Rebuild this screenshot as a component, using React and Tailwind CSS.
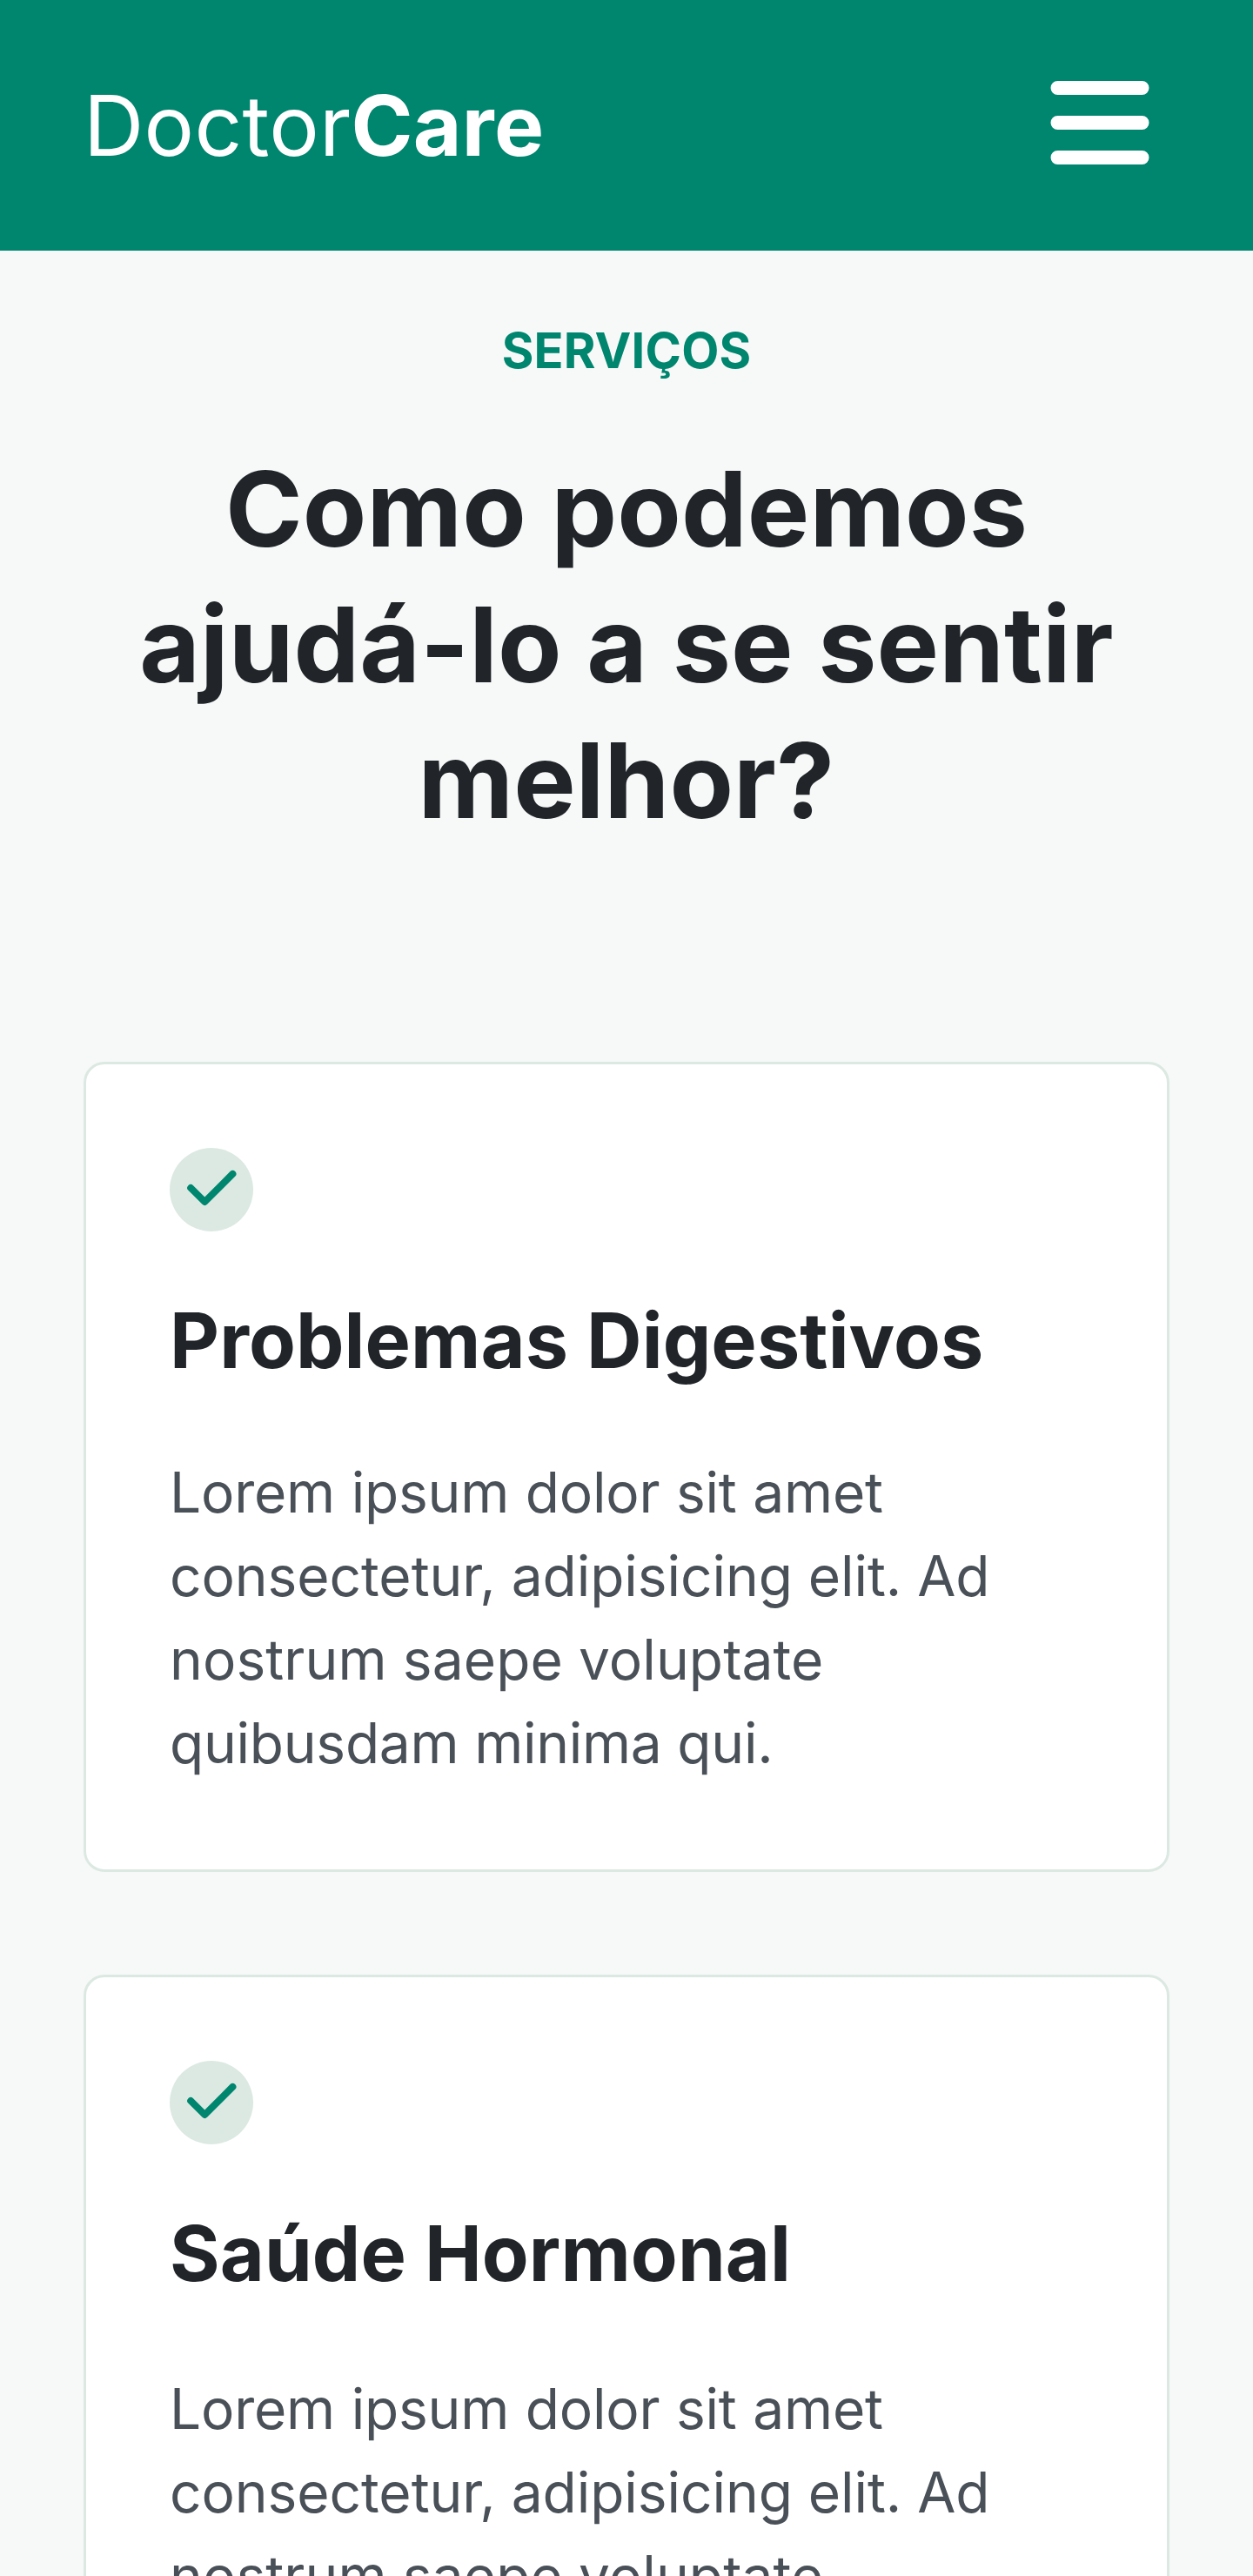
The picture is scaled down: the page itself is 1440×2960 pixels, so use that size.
import React from 'react';

const CARDS = [
  { title: 'Problemas Digestivos', bodyMargin: 'mt-[70px]' },
  { title: 'Saúde Hormonal', bodyMargin: 'mt-[74px]' },
];

const LINES = [
  { text: 'Lorem ipsum dolor sit amet', tracking: 'tracking-[-0.2px] [word-spacing:0.9px]' },
  { text: 'consectetur, adipisicing elit. Ad', tracking: 'tracking-[-0.05px]' },
  { text: 'nostrum saepe voluptate', tracking: 'tracking-[0.11px]' },
  { text: 'quibusdam minima qui.', tracking: 'tracking-[-0.24px]' },
];

function CheckIcon() {
  return (
    <svg className="block" width="96" height="96" viewBox="0 0 96 96" fill="none">
      <circle cx="48" cy="48" r="48" fill="#DCE9E2" />
      <path d="M72.4 29.9L40.3 62L24.2 46" stroke="#00856F" strokeWidth="8" strokeLinecap="round" strokeLinejoin="round" />
    </svg>
  );
}

function MenuIcon() {
  return (
    <svg width="160" height="160" viewBox="0 0 160 160" fill="none">
      <path d="M31.5 37H128.5M31.5 77H128.5M31.5 117H128.5" stroke="white" strokeWidth="16" strokeLinecap="round" />
    </svg>
  );
}

function Card({ title, bodyMargin }) {
  return (
    <article className="rounded-[24px] border-[3px] border-[#dce9e2] bg-white px-[96px] pt-[96px] pb-[97px]">
      <CheckIcon />
      <h3 className="mt-[68px] text-[88px] leading-[114px] font-bold tracking-[0.11px] text-[#212529]">{title}</h3>
      <p className={`${bodyMargin} text-[64px] leading-[96px] whitespace-nowrap text-[#495057]`}>
        {LINES.map((line) => (
          <span key={line.text} className={`block ${line.tracking}`}>{line.text}</span>
        ))}
      </p>
    </article>
  );
}

export default function App() {
  return (
    <div className="h-[2960px] overflow-hidden bg-[#f7f9f8] font-['Inter',sans-serif]">
      <nav className="flex h-[288px] items-center justify-between bg-[#00856f] px-[96px]">
        <div className="text-[96px] leading-[116px] font-normal tracking-[0.28px] text-white">
          Doctor<b className="font-bold">Care</b>
        </div>
        <MenuIcon />
      </nav>
      <main className="px-[96px] pt-[73px]">
        <header className="text-center">
          <h4 className="text-[56px] leading-[84px] font-bold tracking-[0.2px] text-[#00856f]">SERVIÇOS</h4>
          <h2 className="mt-[62px] text-[120px] leading-[156px] font-bold tracking-[0.14px] text-[#212529]">
            Como podemos ajudá-lo a se sentir melhor?
          </h2>
        </header>
        <div className="mt-[245px] grid gap-[118px]">
          {CARDS.map((card) => (
            <Card key={card.title} {...card} />
          ))}
        </div>
      </main>
    </div>
  );
}
